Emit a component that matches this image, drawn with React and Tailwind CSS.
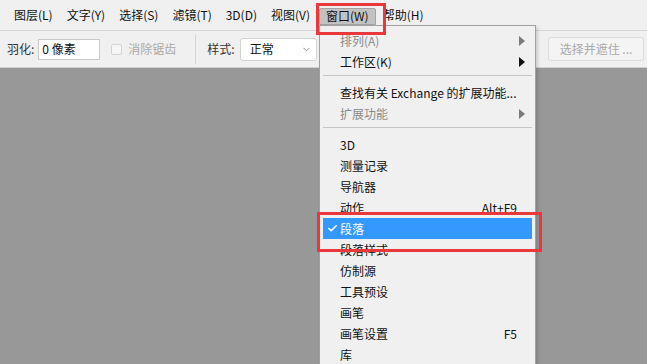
import { Check, ChevronDown } from 'lucide-react'

const FONT = { fontFamily: '"Noto Sans CJK SC", "Noto Sans", sans-serif' }

const MENUS = ['图层(L)', '文字(Y)', '选择(S)', '滤镜(T)', '3D(D)', '视图(V)']

const ITEMS = [
  { label: '排列(A)', disabled: true, arrow: true },
  { label: '工作区(K)', arrow: true },
  { sep: true },
  { label: '查找有关 Exchange 的扩展功能...' },
  { label: '扩展功能', disabled: true, arrow: true },
  { sep: true },
  { label: '3D' },
  { label: '测量记录' },
  { label: '导航器' },
  { label: '动作', key: 'Alt+F9' },
  { label: '段落', active: true },
  { label: '段落样式' },
  { label: '仿制源' },
  { label: '工具预设' },
  { label: '画笔' },
  { label: '画笔设置', key: 'F5' },
  { label: '库' },
]

function Arrow({ disabled }) {
  return (
    <svg width="6" height="10" viewBox="0 0 6 10" className="ml-auto">
      <path d="M0 0 L6 5 L0 10 Z" fill={disabled ? '#7a7a7a' : '#111'} />
    </svg>
  )
}

function MenuRow({ item }) {
  if (item.sep) {
    return (
      <div className="h-[10px] pt-[3px] px-[3px]">
        <div className="h-px bg-[#c6c6c6]" />
      </div>
    )
  }
  return (
    <div
      className={`relative h-[21px] mx-[3px] pl-[17px] pr-[7px] flex items-center text-[12px] leading-none ${
        item.active ? 'bg-[#3399ff] text-white' : item.disabled ? 'text-[#8a8a8a]' : 'text-[#111]'
      }`}
    >
      {item.active && (
        <Check size={11} strokeWidth={3.5} className="absolute left-[4px] top-[5px] text-white" />
      )}
      <span>{item.label}</span>
      {item.key && <span className="ml-auto mr-[8px]">{item.key}</span>}
      {item.arrow && <Arrow disabled={item.disabled} />}
    </div>
  )
}

export default function App() {
  return (
    <div className="relative w-[647px] h-[364px] overflow-hidden bg-[#989898] flex flex-col" style={FONT}>
      {/* menu bar */}
      <div className="h-[31px] bg-[#f0f0f0] border-b border-[#d6d6d6] flex items-center pl-[14px] gap-[14px] text-[12px] text-[#111] leading-none">
        {MENUS.map((m) => (
          <span key={m}>{m}</span>
        ))}
        <span className="h-[17px] mt-[2px] -ml-[5px] px-[6px] flex items-center bg-[#c2c2c2] border border-[#a3a3a3] rounded-t-[2px]">
          窗口(W)
        </span>
        <span className="-ml-[7px]">帮助(H)</span>
      </div>

      {/* options bar */}
      <div className="h-[37px] bg-[#f0f0f0] border-b border-[#d2d2d2] flex items-center text-[12px] leading-none text-[#333]">
        <span className="ml-[7px]">羽化:</span>
        <div className="ml-[4px] w-[62px] h-[21px] bg-white border border-[#c9c9c9] flex items-center pl-[3px] text-[#111]">
          0 像素
        </div>
        <span className="ml-[11px] w-[11px] h-[11px] rounded-[2px] border border-[#d4d4d4] bg-[#f6f6f6]" />
        <span className="ml-[6px] text-[#a9a9a9]">消除锯齿</span>
        <span className="ml-[19px] w-px h-[30px] bg-[#d6d6d6]" />
        <span className="ml-[11px]">样式:</span>
        <div className="ml-[5px] w-[77px] h-[23px] bg-white border border-[#d2d2d2] rounded-[3px] flex items-center pl-[9px] pr-[4px] text-[#111]">
          <span>正常</span>
          <ChevronDown size={11} className="ml-auto text-[#888]" />
        </div>
        <div className="ml-auto mr-[3px] w-[96px] h-[24px] border border-[#dcdcdc] bg-[#f4f4f4] rounded-[3px] flex items-center justify-center text-[#a9a9a9]">
          选择并遮住 ...
        </div>
      </div>

      <div className="flex-1" />

      {/* window menu dropdown */}
      <div className="absolute left-[319px] top-[25px] w-[217px] h-[345px] bg-[#f0f0f0] border border-[#a0a0a0] pt-[4px] shadow-[2px_2px_3px_rgba(0,0,0,0.15)]">
        {ITEMS.map((it, i) => (
          <MenuRow key={i} item={it} />
        ))}
      </div>

      {/* red highlight boxes */}
      <div className="absolute left-[316px] top-[3px] w-[70px] h-[32px] border-[3px] border-[#e8383b]" />
      <div className="absolute left-[317px] top-[212px] w-[225px] h-[40px] border-[3px] border-[#e8383b]" />
    </div>
  )
}
